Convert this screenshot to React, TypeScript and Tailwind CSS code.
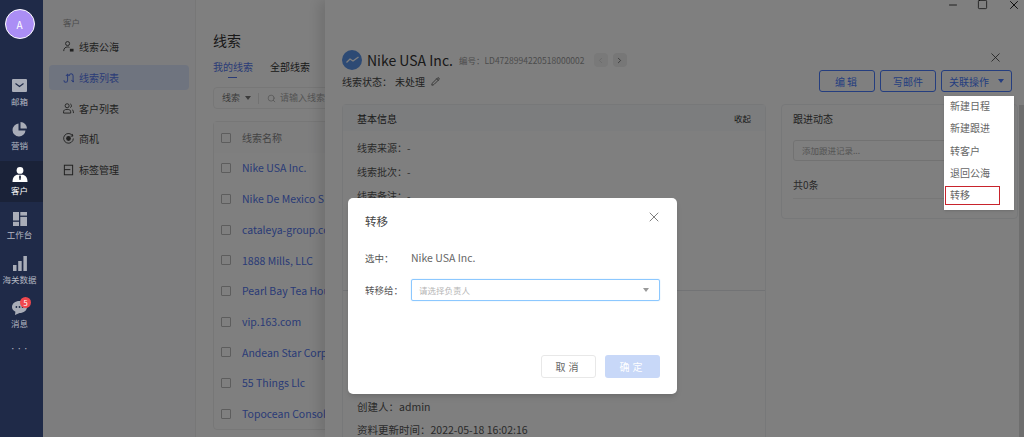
import React from 'react';
import { ChevronLeft, ChevronRight, Pencil, Search, X, Minus, Square } from 'lucide-react';

const fontStack = 'font-["Noto_Sans_CJK_SC",Roboto,sans-serif]';

const MailIcon = () => (
  <svg width="15" height="13" viewBox="0 0 15 13">
    <rect x="0" y="0" width="15" height="13" rx="1" fill="#a9adb8" />
    <path d="M3.5 4.5 L7.5 7.5 L11.5 4.5" fill="none" stroke="#1f2a48" strokeWidth="1.1" />
  </svg>
);

const PieIcon = () => (
  <svg width="15" height="15" viewBox="0 0 15 15">
    <path d="M6.5 1.5 A6.5 6.5 0 1 0 13.5 8.5 L6.5 8.5 Z" fill="#a9adb8" />
    <path d="M8.5 0 A6.5 6.5 0 0 1 15 6.5 L8.5 6.5 Z" fill="#a9adb8" />
  </svg>
);

const PersonIcon = () => (
  <svg width="16" height="15" viewBox="0 0 16 15">
    <circle cx="8" cy="3.4" r="3.4" fill="#ffffff" />
    <path d="M0.5 15 C0.5 10 3 7.8 6 7.8 L10 7.8 C13 7.8 15.5 10 15.5 15 Z" fill="#ffffff" />
    <path d="M8 8 L9 9.5 L8.5 13 L7.5 13 L7 9.5 Z" fill="#1a2238" />
  </svg>
);

const BoardIcon = () => (
  <svg width="14" height="14" viewBox="0 0 14 14" fill="#a9adb8">
    <rect x="0" y="0" width="6" height="8.5" />
    <rect x="0" y="9.8" width="6" height="4.2" />
    <rect x="7.3" y="0" width="6.7" height="3.6" />
    <rect x="7.3" y="4.9" width="6.7" height="9.1" />
  </svg>
);

const BarsIcon = () => (
  <svg width="14" height="15" viewBox="0 0 14 15" fill="#a9adb8">
    <rect x="0" y="9" width="3.5" height="6" />
    <rect x="5.2" y="5" width="3.5" height="10" />
    <rect x="10.4" y="0" width="3.5" height="15" />
  </svg>
);

const ChatIcon = () => (
  <svg width="15" height="14" viewBox="0 0 15 14">
    <path d="M7.5 0 C11.8 0 15 2.6 15 6 C15 9.4 11.8 12 7.5 12 L3 14 L3.4 10.8 C1.2 9.7 0 8 0 6 C0 2.6 3.2 0 7.5 0 Z" fill="#a9adb8" />
    <circle cx="4.4" cy="6" r="0.9" fill="#1f2a48" />
    <circle cx="7.5" cy="6" r="0.9" fill="#1f2a48" />
    <circle cx="10.6" cy="6" r="0.9" fill="#1f2a48" />
  </svg>
);

// sub nav icons, drawn on a 12 box
const SeaIcon = () => (
  <svg width="11" height="11" viewBox="0 0 12 12" fill="none" stroke="currentColor" strokeWidth="1">
    <circle cx="5" cy="2.8" r="2.2" />
    <path d="M0.8 11 C0.8 8 2.5 6.5 5 6.5 C5.8 6.5 6.4 6.6 7 7" />
    <rect x="7.5" y="8.5" width="4" height="3" fill="currentColor" stroke="none" />
  </svg>
);

const LeadIcon = () => (
  <svg width="11" height="12" viewBox="0 0 12 12" fill="none" stroke="currentColor" strokeWidth="1.1">
    <path d="M1 8.5 C1 11.5 5 11.5 5 8.5 L5 2" />
    <path d="M3.2 3.8 L5 1.8 L6.8 3.8" />
    <path d="M7 3.5 C7 0.5 11 0.5 11 3.5 L11 10" />
    <path d="M9.2 8.2 L11 10.2 L12 9" />
  </svg>
);

const CustomerIcon = () => (
  <svg width="11" height="11" viewBox="0 0 12 12" fill="none" stroke="currentColor" strokeWidth="1">
    <circle cx="4.5" cy="3" r="2.2" />
    <path d="M0.6 11 L0.6 9.6 C0.6 7.8 2 7 4.5 7 C7 7 8.4 7.8 8.4 9.6 L8.4 11 Z" />
    <path d="M8 1 C9.4 1.2 9.8 4.6 8 5" />
    <path d="M10 7.4 C11 7.8 11.4 8.8 11.4 11" />
  </svg>
);

const DealIcon = () => (
  <svg width="11" height="11" viewBox="0 0 12 12" fill="none" stroke="currentColor" strokeWidth="1">
    <path d="M10.6 3.2 A5.3 5.3 0 1 0 11.3 6" />
    <circle cx="6" cy="6" r="2.6" fill="currentColor" stroke="none" />
    <path d="M10 1 L10.8 3.4 L8.4 3.4" />
  </svg>
);

const TagIcon = () => (
  <svg width="11" height="12" viewBox="0 0 12 12" fill="none" stroke="currentColor" strokeWidth="1.1">
    <rect x="1.5" y="0.8" width="9" height="10.4" />
    <path d="M1.5 5.6 L8 5.6" />
  </svg>
);

const Caret = ({ className }: { className: string }) => (
  <span className={`inline-block w-0 h-0 border-x-[3px] border-x-transparent border-t-[4px] ${className}`} />
);

const sideItems = [
  { label: '邮箱', icon: <MailIcon /> },
  { label: '营销', icon: <PieIcon /> },
  { label: '客户', icon: <PersonIcon />, active: true },
  { label: '工作台', icon: <BoardIcon /> },
  { label: '海关数据', icon: <BarsIcon /> },
  { label: '消息', icon: <ChatIcon />, badge: 5 },
];

const subNav = [
  { label: '线索公海', icon: <SeaIcon /> },
  { label: '线索列表', icon: <LeadIcon />, active: true },
  { label: '客户列表', icon: <CustomerIcon /> },
  { label: '商机', icon: <DealIcon /> },
  { label: '标签管理', icon: <TagIcon /> },
];

const companies = [
  'Nike USA Inc.',
  'Nike De Mexico S',
  'cataleya-group.co',
  '1888 Mills, LLC',
  'Pearl Bay Tea Hou',
  'vip.163.com',
  'Andean Star Corp',
  '55 Things Llc',
  'Topocean Consoli',
];

const menuItems = ['新建日程', '新建跟进', '转客户', '退回公海', '转移'];

const App = () => {
  return (
    <div className={`relative flex w-[1024px] h-[437px] overflow-hidden bg-white ${fontStack}`}>
      {/* left rail */}
      <div className="relative z-20 w-[43px] shrink-0 bg-[#1f2a48] flex flex-col">
        <div className="mt-[9px] ml-[4.5px] w-[30px] h-[30px] shrink-0 rounded-full bg-[#ab8ef5] border border-white text-white text-[10px] flex items-center justify-center">
          A
        </div>
        <div className="mt-[31px] w-full flex flex-col">
          {sideItems.map(item => (
            <div
              key={item.label}
              className={`relative w-full pr-[4px] flex flex-col items-center justify-center gap-[2px] ${item.active ? 'h-[41px] my-[1.75px] bg-[#1a2238] text-white' : 'h-[44.5px] text-[#b4b8c2]'}`}
            >
              <div className="h-[15px] flex items-center">{item.icon}</div>
              <span className="text-[8.5px] leading-[12px] whitespace-nowrap">{item.label}</span>
              {item.badge && (
                <span className="absolute top-[4.5px] left-[20px] w-[11px] h-[11px] rounded-full bg-[#f0484e] text-white text-[7.5px] leading-[11px] text-center">
                  {item.badge}
                </span>
              )}
            </div>
          ))}
          <div className="pr-[4px] mt-[7px] text-[#b4b8c2] text-center text-[6px] leading-[10px] tracking-[0.5px]">•••</div>
        </div>
      </div>

      {/* sub nav */}
      <div className="w-[153px] shrink-0 bg-[#fafbfc] border-r border-[#eeeeee] pt-[16px] px-[6px]">
        <div className="pl-[14px] text-[8.5px] leading-[12px] text-[#999999]">客户</div>
        <div className="mt-[3.5px] flex flex-col">
          {subNav.map(item => (
            <div key={item.label} className="h-[30.7px] py-[3.3px]">
              <div className={`h-full flex items-center gap-[5px] pl-[14px] rounded-sm text-[10px] ${item.active ? 'bg-[#dee8ff] text-[#5577ee]' : 'text-[#444444]'}`}>
                {item.icon}
                <span>{item.label}</span>
              </div>
            </div>
          ))}
        </div>
      </div>

      {/* list */}
      <div className="flex-1 min-w-0 pl-[17px] pt-[30px]">
        <div className="text-[14px] leading-[20px] text-[#333333]">线索</div>
        <div className="mt-[10px] flex gap-[17px] text-[10px] leading-[14px] text-[#333333] whitespace-nowrap">
          <div className="relative text-[#5577ee]">
            我的线索
            <span className="absolute left-[15px] top-[17px] w-[9px] h-[1px] bg-[#5577ee]" />
          </div>
          <div>全部线索</div>
        </div>
        <div className="mt-[13px] w-[400px] h-[22px] border border-[#eeeeee] rounded-sm flex items-center pl-[8px] text-[9px] text-[#777777]">
          <span>线索</span>
          <Caret className="ml-[5px] border-t-[#777777]" />
          <span className="ml-[7px] w-px h-[11px] bg-[#e5e5e5]" />
          <Search size={9} className="ml-[8px] text-[#aaaaaa]" />
          <span className="ml-[4px] text-[#aaaaaa]">请输入线索名称</span>
        </div>
        <div className="mt-[12px] w-[500px] border border-[#eeeeee] rounded-sm">
          <div className="h-[31px] flex items-center pl-[7px] bg-[#fcfcfd] text-[10px] text-[#888888]">
            <span className="w-[10px] h-[10px] border border-[#bbbbbb] rounded-[1px]" />
            <span className="ml-[11px]">线索名称</span>
          </div>
          {companies.map(name => (
            <div key={name} className="h-[30.7px] flex items-center pl-[7px] text-[10.5px] text-[#5577ee] whitespace-nowrap">
              <span className="w-[10px] h-[10px] border border-[#bbbbbb] rounded-[1px] shrink-0" />
              <span className="ml-[11px]">{name}</span>
            </div>
          ))}
        </div>
      </div>

      {/* detail drawer */}
      <div className="absolute top-0 bottom-0 left-[325px] right-0 bg-white shadow-[-6px_0_12px_rgba(0,0,0,0.12)] overflow-hidden">
        <div className="h-[50px]">
          <div className="h-[9px] flex justify-end items-center pr-[3.5px] gap-[18.5px] text-black">
            <Minus size={12} strokeWidth={1.5} />
            <Square size={11} strokeWidth={1.5} />
            <X size={14} strokeWidth={1.5} />
          </div>
        </div>
        <div className="pl-[17px] pr-[12px] flex items-center h-[20px]">
          <span className="w-[20px] h-[20px] rounded-full bg-[#5b94e8] flex items-center justify-center">
            <svg width="13" height="8" viewBox="0 0 13 8" fill="none" stroke="white" strokeWidth="1.3">
              <path d="M0.5 6.5 L4 3 L7 5 L12.5 1" />
            </svg>
          </span>
          <span className="ml-[5px] text-[14px] text-[#333333]">Nike USA Inc.</span>
          <span className="ml-[6px] text-[8.5px] text-[#999999]">编号：LD4728994220518000002</span>
          <span className="ml-[9px] w-[14px] h-[14px] bg-[#f3f3f3] rounded-sm flex items-center justify-center text-[#cccccc]">
            <ChevronLeft size={9} />
          </span>
          <span className="ml-[5px] w-[14px] h-[14px] bg-[#eeeeee] rounded-sm flex items-center justify-center text-[#555555]">
            <ChevronRight size={9} />
          </span>
          <X size={15} strokeWidth={1.25} className="ml-auto mr-[9.5px] relative -top-[3px] text-[#333333]" />
        </div>
        <div className="pl-[17px] pr-[12px] flex items-center justify-between h-[22px] text-[10px] text-[#444444]">
          <div className="flex items-center">
            <span>线索状态：</span>
            <span className="ml-[3px]">未处理</span>
            <Pencil size={9} className="ml-[6px]" />
          </div>
          <div className="flex gap-[5px] text-[10px] text-[#4a7cff]">
            <div className="w-[56px] h-[22px] border border-[#4a7cff] rounded-[3px] flex items-center justify-center tracking-[2px]">编辑</div>
            <div className="w-[56px] h-[22px] border border-[#4a7cff] rounded-[3px] flex items-center justify-center">写邮件</div>
            <div className="w-[71px] h-[22px] border border-[#4a7cff] rounded-[3px] flex items-center justify-center gap-[9px]">
              关联操作
              <Caret className="border-t-[#4a7cff]" />
            </div>
          </div>
        </div>

        <div className="mt-[12px] ml-[17px] flex items-start gap-[15px]">
          <div className="w-[424px] h-[345px] border border-[#eef0f3] rounded-sm text-[10px] text-[#555555]">
            <div className="h-[26px] px-[14px] bg-[#f9fafc] flex items-center justify-between text-[#333333]">
              <span>基本信息</span>
              <span className="text-[8.5px]">收起</span>
            </div>
            <div className="px-[14px] pt-[10px] flex flex-col gap-[10px] leading-[14px]">
              <div>线索来源：-</div>
              <div>线索批次：-</div>
              <div>线索备注：-</div>
            </div>
            <div className="mt-[87px] border-t border-[#e5e7eb]" />
            <div className="mt-[109px] px-[14px] flex flex-col gap-[10px] leading-[13px] text-[10.5px] whitespace-nowrap">
              <div>创建人：admin</div>
              <div>资料更新时间：2022-05-18 16:02:16</div>
            </div>
          </div>
          <div className="w-[237px] h-[115px] border border-[#eef0f3] rounded-sm px-[11px] text-[10px] text-[#555555]">
            <div className="h-[26px] flex items-center text-[#444444]">跟进动态</div>
            <div className="mt-[9px] w-[210px] h-[21px] border border-[#e5e5e5] rounded-[3px] pl-[8px] flex items-center text-[8.5px] text-[#aaaaaa]">
              添加跟进记录...
            </div>
            <div className="mt-[16px] text-[#555555]">共0条</div>
            <div className="mt-[6px] border-t border-[#eeeeee]" />
          </div>
        </div>
        <div className="absolute top-[105px] right-0 bottom-0 w-[5px] bg-[#dddddd]" />
      </div>

      {/* mask */}
      <div className="absolute top-0 bottom-0 left-[43px] right-0 z-10 bg-black/50" />

      {/* action menu */}
      <div className="absolute z-20 left-[944px] top-[96px] w-[70px] h-[114px] bg-white shadow-sm">
        <div className="flex flex-col -mt-[1.5px]">
          {menuItems.map(item => (
            <div key={item} className="h-[22.3px] flex items-center pl-[6px] text-[10px] text-[#666666]">
              {item}
            </div>
          ))}
        </div>
        <div className="absolute left-[1px] top-[90px] w-[55px] h-[19px] border-[1.5px] border-[#c8232c]" />
      </div>

      {/* transfer dialog */}
      <div className="absolute z-20 left-[348px] top-[198px] w-[329px] h-[196px] bg-white rounded-[5px] shadow-md px-[17px] flex flex-col">
        <div className="h-[19px] mt-[14px] flex items-center justify-between text-[11.5px] text-[#444444]">
          <span>转移</span>
          <X size={16} strokeWidth={1.25} className="text-[#666666] relative -top-[5px] left-[2px]" />
        </div>
        <div className="mt-[20px] flex items-center h-[14px] text-[9.5px] text-[#555555]">
          <span className="w-[46px]">选中：</span>
          <span className="text-[10.5px] text-[#666666]">Nike USA Inc.</span>
        </div>
        <div className="mt-[14px] flex items-center text-[9.5px] text-[#555555]">
          <span className="w-[46px]">转移给：</span>
          <div className="flex-1 h-[22px] border border-[#8cc8ff] rounded-[2px] flex items-center justify-between pl-[7px] pr-[10px] text-[8.5px] text-[#b5b5b5] shadow-[0_0_1px_#8cc8ff]">
            <span>请选择负责人</span>
            <Caret className="border-t-[#999999]" />
          </div>
        </div>
        <div className="mt-[54px] flex justify-end gap-[9px] text-[10px]">
          <div className="w-[55px] h-[23px] border border-[#e8e8e8] rounded-[3px] flex items-center justify-center tracking-[3px] text-[#666666]">取消</div>
          <div className="w-[55px] h-[23px] bg-[#c8d8f8] rounded-[3px] flex items-center justify-center tracking-[3px] text-white">确定</div>
        </div>
      </div>
    </div>
  );
};

export default App;
